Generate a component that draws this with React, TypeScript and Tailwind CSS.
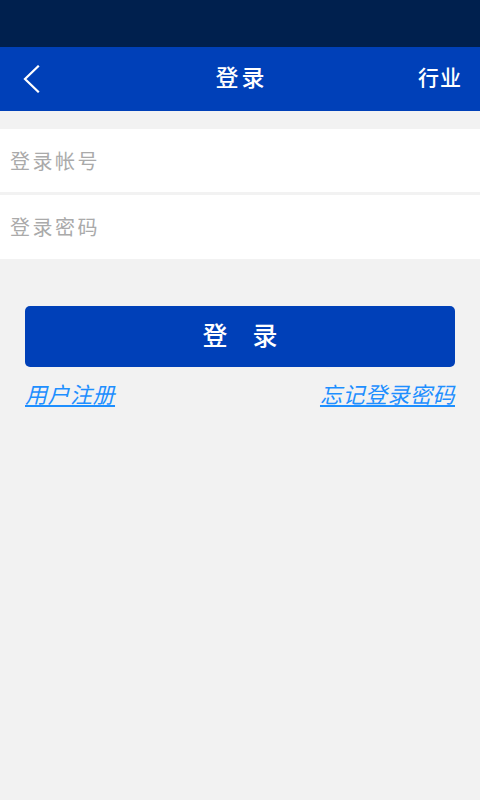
import React from "react";

export default function App() {
  const cjk = { fontFamily: '"Noto Sans CJK SC", "Noto Sans", sans-serif' };
  return (
    <div className="w-[480px] h-[800px] bg-[#f2f2f2] flex flex-col" style={cjk}>
      <div className="h-[47px] bg-[#00204e]" />
      <div className="h-[64px] bg-[#0040b8] flex items-center justify-between relative pb-[5px]">
        <div className="w-[60px] h-full flex items-center pl-[22px] pt-[5px]">
          <svg width="20" height="28" viewBox="0 0 20 28" fill="none">
            <path d="M16 1.5 L3 14 L16 26.5" stroke="white" strokeWidth="2.2" strokeLinecap="square" />
          </svg>
        </div>
        <div className="absolute left-0 right-0 top-0 h-full flex items-center justify-center pointer-events-none pb-[6px]">
          <span className="text-white text-[23px] font-medium tracking-[3px] pl-[3px]">登录</span>
        </div>
        <span className="text-white text-[21px] font-medium tracking-[1px] pr-[18px]">行业</span>
      </div>
      <div className="mt-[18px] flex flex-col gap-[3px]">
        <div className="h-[63px] bg-white flex items-center pl-[10px]">
          <span className="text-[#aaaaaa] text-[20px] tracking-[2.5px]">登录帐号</span>
        </div>
        <div className="h-[64px] bg-white flex items-center pl-[10px]">
          <span className="text-[#aaaaaa] text-[20px] tracking-[2.5px]">登录密码</span>
        </div>
      </div>
      <div className="mx-[25px] mt-[47px] h-[61px] bg-[#0040b8] rounded-[5px] flex items-center justify-center pb-[3px]">
        <span className="text-white text-[25px] font-medium tracking-[25px] pl-[25px]">登录</span>
      </div>
      <div className="mx-[25px] mt-[12px] flex justify-between">
        <span className="text-[#1e8fff] text-[22px] tracking-[0.5px] italic underline leading-[28px]">用户注册</span>
        <span className="text-[#1e8fff] text-[22px] tracking-[0.5px] italic underline leading-[28px]">忘记登录密码</span>
      </div>
    </div>
  );
}
